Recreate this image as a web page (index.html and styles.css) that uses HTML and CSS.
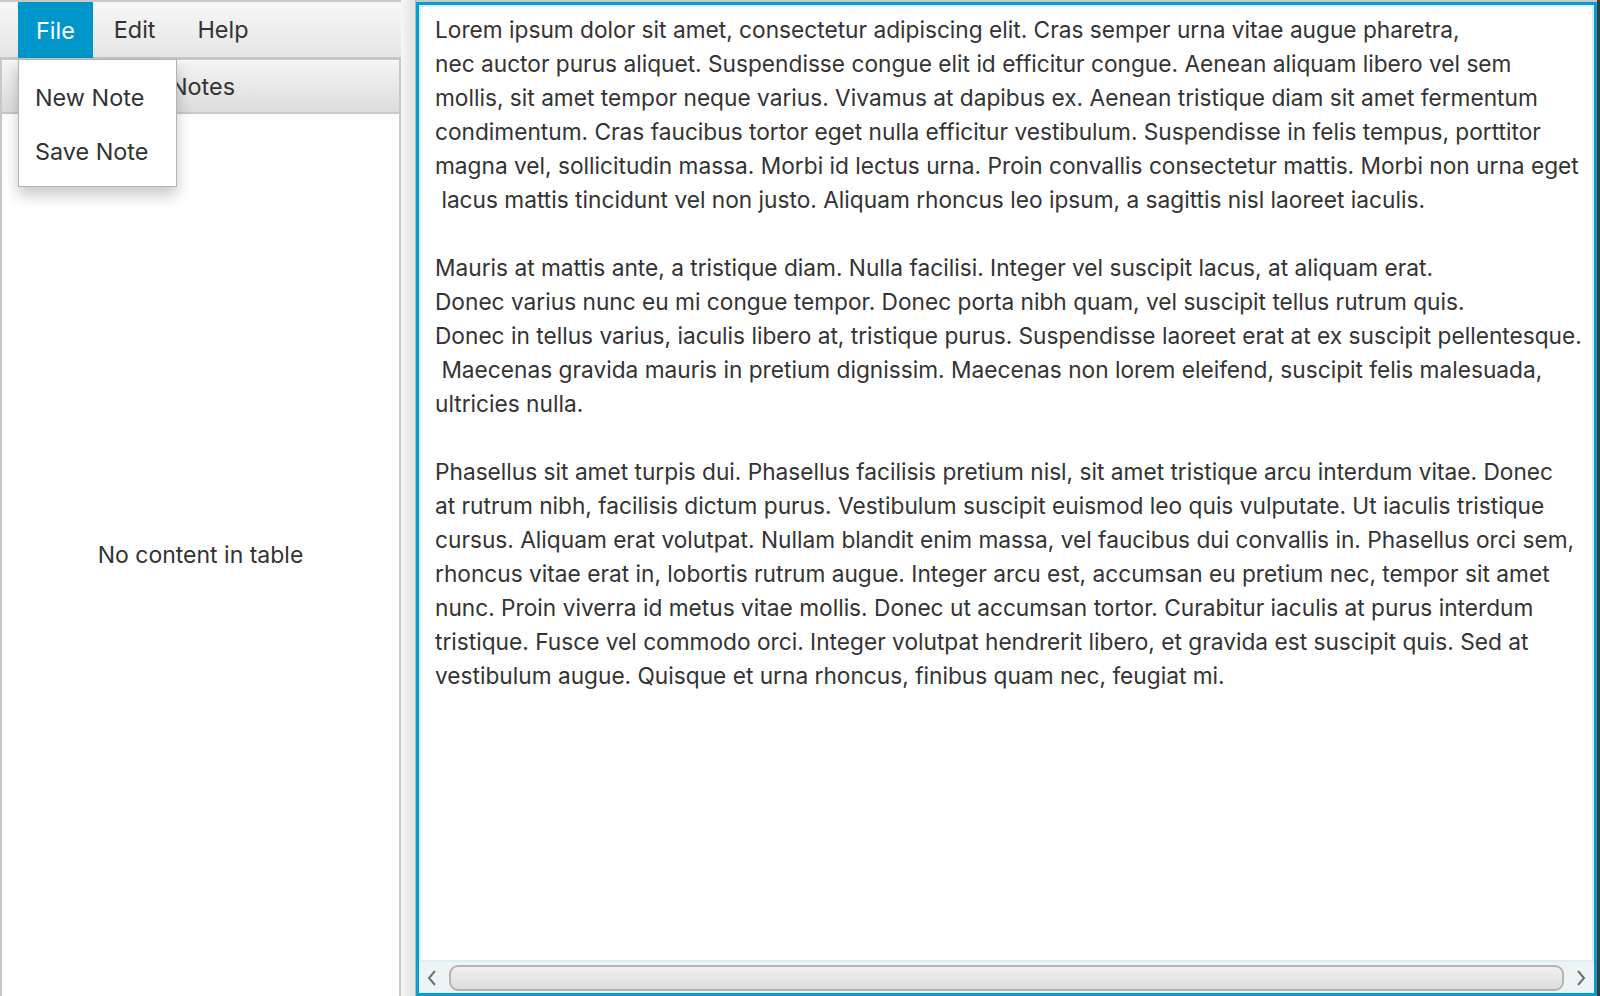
FILE: index.html
```html
<!DOCTYPE html>
<html>
<head>
<meta charset="utf-8">
<link rel="stylesheet" href="styles.css">
</head>
<body>
<div class="window">
  <div class="left">
    <div class="menubar">
      <div class="menu active">File</div>
      <div class="menu">Edit</div>
      <div class="menu">Help</div>
    </div>
    <div class="table">
      <div class="header"><span>Notes</span></div>
      <div class="body">No content in table</div>
    </div>
    <div class="popup">
      <div class="item">New Note</div>
      <div class="item">Save Note</div>
    </div>
  </div>
  <div class="divider"></div>
  <div class="editor">
    <div class="text">Lorem ipsum dolor sit amet, consectetur adipiscing elit. Cras semper urna vitae augue pharetra,
nec auctor purus aliquet. Suspendisse congue elit id efficitur congue. Aenean aliquam libero vel sem
mollis, sit amet tempor neque varius. Vivamus at dapibus ex. Aenean tristique diam sit amet fermentum
condimentum. Cras faucibus tortor eget nulla efficitur vestibulum. Suspendisse in felis tempus, porttitor
magna vel, sollicitudin massa. Morbi id lectus urna. Proin convallis consectetur mattis. Morbi non urna eget
 lacus mattis tincidunt vel non justo. Aliquam rhoncus leo ipsum, a sagittis nisl laoreet iaculis.

Mauris at mattis ante, a tristique diam. Nulla facilisi. Integer vel suscipit lacus, at aliquam erat.
Donec varius nunc eu mi congue tempor. Donec porta nibh quam, vel suscipit tellus rutrum quis.
Donec in tellus varius, iaculis libero at, tristique purus. Suspendisse laoreet erat at ex suscipit pellentesque.
 Maecenas gravida mauris in pretium dignissim. Maecenas non lorem eleifend, suscipit felis malesuada,
ultricies nulla.

Phasellus sit amet turpis dui. Phasellus facilisis pretium nisl, sit amet tristique arcu interdum vitae. Donec
at rutrum nibh, facilisis dictum purus. Vestibulum suscipit euismod leo quis vulputate. Ut iaculis tristique
cursus. Aliquam erat volutpat. Nullam blandit enim massa, vel faucibus dui convallis in. Phasellus orci sem,
rhoncus vitae erat in, lobortis rutrum augue. Integer arcu est, accumsan eu pretium nec, tempor sit amet
nunc. Proin viverra id metus vitae mollis. Donec ut accumsan tortor. Curabitur iaculis at purus interdum
tristique. Fusce vel commodo orci. Integer volutpat hendrerit libero, et gravida est suscipit quis. Sed at
vestibulum augue. Quisque et urna rhoncus, finibus quam nec, feugiat mi.</div>
    <div class="hscroll">
      <svg class="arrow" width="14" height="18" viewBox="0 0 14 18"><path d="M10 2 L4 9 L10 16" fill="none" stroke="#707070" stroke-width="2"/></svg>
      <div class="thumb"></div>
      <svg class="arrow" width="14" height="18" viewBox="0 0 14 18"><path d="M4 2 L10 9 L4 16" fill="none" stroke="#707070" stroke-width="2"/></svg>
    </div>
  </div>
  <div class="edge"></div>
</div>
</body>
</html>
```

FILE: styles.css
```css
html, body {
  margin: 0;
  padding: 0;
}
body {
  width: 1600px;
  height: 996px;
  overflow: hidden;
  font-family: "Inter", "Liberation Sans", sans-serif;
  color: #333333;
}
.window {
  display: flex;
  height: 996px;
  box-sizing: border-box;
  padding-top: 2px;
  background: #c8c8c8;
}
.left {
  position: relative;
  width: 401px;
  display: flex;
  flex-direction: column;
  flex: none;
}
.menubar {
  height: 55px;
  display: flex;
  padding-left: 18px;
  background: linear-gradient(to bottom, #f7f7f7, #e5e5e5);
  border-bottom: 3px solid #c6c6c6;
}
.menu {
  display: flex;
  align-items: center;
  padding: 0 21px;
  font-size: 23.4px;
  color: #333;
}
.menu.active {
  background: #0096c9;
  color: #ffffff;
  padding: 0 18px;
  height: 56px;
}
.table {
  flex: 1;
  display: flex;
  flex-direction: column;
  border-left: 2px solid #c8c8c8;
  border-right: 2px solid #c8c8c8;
  background: #ffffff;
}
.header {
  height: 51px;
  display: flex;
  align-items: center;
  justify-content: center;
  font-size: 23.4px;
  padding-left: 4px;
  background: linear-gradient(to bottom, #f4f4f4, #dcdcdc);
  border-top: 1px solid #fbfbfb;
  border-bottom: 2px solid #c8c8c8;
}
.body {
  flex: 1;
  display: flex;
  align-items: center;
  justify-content: center;
  font-size: 23px;
}
.popup {
  position: absolute;
  left: 18px;
  top: 57px;
  width: 157px;
  padding: 10px 0 8px;
  background: #ffffff;
  border: 1px solid #b3b3b3;
  box-shadow: 0 8px 14px rgba(0, 0, 0, 0.22);
}
.item {
  height: 54px;
  display: flex;
  align-items: center;
  padding-left: 16px;
  font-size: 23.4px;
}
.divider {
  width: 14px;
  flex: none;
  background: linear-gradient(to right, #f6f6f6, #e2e2e2);
  border-right: 1px solid #b9b9b9;
  margin-top: -2px;
}
.editor {
  flex: 1;
  display: flex;
  flex-direction: column;
  border: 3px solid #039ed3;
  background: #ffffff;
  box-shadow: inset 0 0 0 2px #dcedf5;
  overflow: hidden;
}
.text {
  flex: 1;
  white-space: pre;
  font-size: 22.7px;
  line-height: 34px;
  padding: 8px 0 0 16px;
  overflow: hidden;
}
.hscroll {
  height: 31px;
  display: flex;
  align-items: center;
  gap: 10px;
  padding: 0 6px 0 6px;
  background: #eef3f6;
  border-top: 2px solid #dcedf5;
}
.arrow {
  flex: none;
}
.thumb {
  flex: 1;
  height: 22px;
  border: 2px solid #b4b4b4;
  border-radius: 9px;
  background: linear-gradient(to bottom, #f0f0f0, #dddddd);
}
.edge {
  width: 3px;
  flex: none;
  background: #3c3c3c;
  margin-top: -2px;
}
```
